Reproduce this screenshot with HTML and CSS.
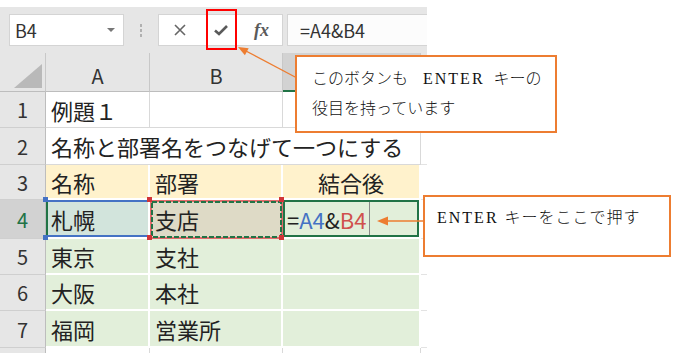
FILE: index.html
```html
<!DOCTYPE html>
<html lang="ja">
<head>
<meta charset="utf-8">
<link rel="stylesheet" href="styles.css">
</head>
<body>
<div class="toolbar">
  <div class="namebox"><span>B4</span><span class="caret"></span></div>
  <div class="sep"><i></i><i></i><i></i></div>
  <div class="btns">
    <span class="btn"><svg width="14" height="14" viewBox="0 0 14 14"><path d="M2 2L12 12M12 2L2 12" stroke="#666" stroke-width="1.6" fill="none"/></svg></span>
    <span class="btn"><svg width="16" height="14" viewBox="0 0 16 14"><path d="M2 7.5L6 11L14 3" stroke="#5a5a5a" stroke-width="2.6" fill="none"/></svg></span>
    <span class="btn fx">fx</span>
  </div>
  <div class="formula">=A4&amp;B4</div>
</div>

<div class="sheet">
  <div class="hd corner"><span class="tri"></span></div>
  <div class="hd">A</div>
  <div class="hd">B</div>
  <div class="hd sel">C</div>
  <div class="hd end"></div>

  <div class="rh">1</div>
  <div class="w">例題１</div>
  <div class="w"></div>
  <div class="w"></div>
  <div class="end"></div>

  <div class="rh">2</div>
  <div class="w span3">名称と部署名をつなげて一つにする</div>
  <div class="end"></div>

  <div class="rh">3</div>
  <div class="yl">名称</div>
  <div class="yl">部署</div>
  <div class="yl center">結合後</div>
  <div class="end"></div>

  <div class="rh sel">4</div>
  <div class="gr a4">札幌<span class="h hb tl"></span><span class="h hb bl"></span></div>
  <div class="gr b4">支店<svg class="ants" viewBox="0 0 133 39" preserveAspectRatio="none"><rect x="1" y="1" width="131" height="37" fill="none" stroke="#e06c6c" stroke-width="2"/><rect x="2" y="2" width="129" height="35" fill="none" stroke="#217346" stroke-width="2" stroke-dasharray="5 2"/></svg><span class="h hr tl"></span><span class="h hr bl"></span><span class="h hr tr"></span><span class="h hr br"></span></div>
  <div class="gr c4"><span>=</span><span class="ra">A4</span><span>&amp;</span><span class="rb">B4</span><span class="cur"></span></div>
  <div class="end"></div>

  <div class="rh">5</div>
  <div class="gr">東京</div>
  <div class="gr">支社</div>
  <div class="gr"></div>
  <div class="end"></div>

  <div class="rh">6</div>
  <div class="gr">大阪</div>
  <div class="gr">本社</div>
  <div class="gr"></div>
  <div class="end"></div>

  <div class="rh">7</div>
  <div class="gr">福岡</div>
  <div class="gr">営業所</div>
  <div class="gr"></div>
  <div class="end"></div>

  <div class="rh last"></div>
  <div class="w last"></div>
  <div class="w last"></div>
  <div class="w last"></div>
  <div class="end last"></div>
</div>

<div class="redbox"></div>

<svg class="arrows" width="676" height="353" viewBox="0 0 676 353">
  <line x1="297" y1="78" x2="245" y2="50.5" stroke="#ed7d31" stroke-width="1.3"/>
  <polygon points="238,47 248.7,48.2 244.9,55.2" fill="#ed7d31"/>
  <line x1="424" y1="221" x2="386" y2="221" stroke="#ed7d31" stroke-width="1.3"/>
  <polygon points="377,221 388,216.5 388,225.5" fill="#ed7d31"/>
</svg>

<div class="callout c1">
  <div class="ln">このボタンも<span class="en e1">ENTER</span>キーの</div>
  <div class="ln">役目を持っています</div>
</div>
<div class="callout c2">
  <div class="ln"><span class="en">ENTER</span><span class="wide">キーをここで押す</span></div>
</div>
</body>
</html>
```

FILE: styles.css
```css
* { box-sizing: border-box; margin: 0; padding: 0; }

body {
  width: 676px;
  height: 353px;
  position: relative;
  overflow: hidden;
  background: #fff;
  font-family: "Noto Sans CJK JP", "Noto Sans", sans-serif;
  color: #222;
}

/* formula bar */
.toolbar {
  margin-top: 7px;
  width: 427px;
  height: 46px;
  background: #e6e6e6;
  display: flex;
  align-items: center;
  padding-left: 9px;
  overflow: hidden;
}
.namebox {
  width: 115px;
  height: 32px;
  background: #fff;
  border: 1px solid #d4d4d4;
  display: flex;
  align-items: center;
  justify-content: space-between;
  padding: 0 8px 0 5px;
  font-size: 18px;
  color: #333;
}
.caret {
  width: 0;
  height: 0;
  border-left: 4px solid transparent;
  border-right: 4px solid transparent;
  border-top: 4px solid #777;
}
.sep {
  width: 34px;
  display: flex;
  flex-direction: column;
  align-items: center;
  gap: 2px;
}
.sep i {
  display: block;
  width: 2px;
  height: 3px;
  background: #b0b0b0;
}
.btns {
  width: 125px;
  height: 32px;
  background: #fff;
  border: 1px solid #d4d4d4;
  display: flex;
}
.btn {
  flex: 1;
  display: flex;
  align-items: center;
  justify-content: center;
}
.fx {
  font-family: "Liberation Serif", serif;
  font-style: italic;
  font-weight: 700;
  font-size: 18px;
  color: #5a5a5a;
}
.formula {
  flex: 1;
  margin-left: 4px;
  height: 32px;
  background: #fcfcfc;
  border: 1px solid #d4d4d4;
  border-right: none;
  padding-left: 12px;
  display: flex;
  align-items: center;
  font-size: 18px;
  color: #333;
}

/* sheet */
.sheet {
  display: grid;
  grid-template-columns: 46px 104px 133px 138px 6px;
  grid-template-rows: 39px 36px 37px 35px 39px 36px 36px 37px 5px;
  font-size: 22px;
}
.sheet > div {
  position: relative;
  display: flex;
  align-items: center;
  padding-left: 5px;
  white-space: nowrap;
  border-right: 1px solid #d9d9d9;
  border-bottom: 1px solid #d9d9d9;
}
.sheet > .hd {
  background: #e6e6e6;
  justify-content: center;
  padding: 6px 0 0;
  font-size: 20px;
  color: #333;
  border-right-color: #c8c8c8;
  border-bottom-color: #bdbdbd;
}
.sheet > .hd.sel {
  background: #d2d2d2;
  border-bottom: 2px solid #217346;
}
.sheet > .hd.end {
  border-right: none;
  background: #e6e6e6;
}
.corner { overflow: hidden; }
.tri {
  position: absolute;
  right: 3px;
  bottom: 3px;
  width: 0;
  height: 0;
  border-left: 28px solid transparent;
  border-bottom: 24px solid #b9b9b9;
}
.sheet > .rh {
  background: #e6e6e6;
  justify-content: center;
  padding: 0;
  font-size: 20px;
  color: #333;
  border-right-color: #bdbdbd;
  border-bottom-color: #cfcfcf;
}
.sheet > .rh.sel {
  background: #d2d2d2;
  color: #217346;
}
.span3 { grid-column: span 3; }
.sheet > .end {
  border-right: none;
  border-bottom-color: #e3e3e3;
}
.sheet > .yl {
  background: #fff2cc;
  border-right: 2px solid #fff;
  border-bottom: 2px solid #fff;
}
.sheet > .center { justify-content: center; padding: 0; }
.sheet > .gr {
  background: #e2efda;
  border-right: 2px solid #fff;
  border-bottom: 2px solid #fff;
}
.sheet > .last { border-bottom: none; }

/* selected row */
.sheet > .a4 { background: #d2e4dc; }
.a4::after {
  content: "";
  position: absolute;
  inset: 0 -2px 0 0;
  border-top: 2px solid #4472c4;
  border-bottom: 2px solid #4472c4;
  border-left: 2px solid #217346;
}
.sheet > .b4 { background: #dedac6; }
.ants {
  position: absolute;
  left: 0;
  top: 0;
  width: 133px;
  height: 39px;
}
.h {
  position: absolute;
  width: 5px;
  height: 5px;
  z-index: 2;
}
.hb { background: #4472c4; }
.hr { background: #d13438; }
.tl { left: -3px; top: -3px; }
.bl { left: -3px; bottom: -3px; }
.tr { right: -3px; top: -3px; }
.br { right: -3px; bottom: -3px; }
.sheet > .c4 { padding-left: 4px; }
.c4::after {
  content: "";
  position: absolute;
  inset: 0;
  border: 2px solid #217346;
}
.ra { color: #4472c4; }
.rb { color: #d0504d; }
.cur {
  align-self: stretch;
  width: 1px;
  margin-left: 3px;
  background: #8a8a8a;
}

/* annotations */
.redbox {
  position: absolute;
  left: 206px;
  top: 9px;
  width: 31px;
  height: 41px;
  border: 2px solid #f00;
}
.arrows {
  position: absolute;
  left: 0;
  top: 0;
}
.callout {
  position: absolute;
  background: #fff;
  border: 2px solid #ed7d31;
  font-family: "Liberation Serif", "Noto Sans CJK JP", serif;
  font-size: 16px;
  font-weight: 300;
  color: #111;
  line-height: 30px;
}
.ln { white-space: nowrap; }
.c1 {
  left: 295px;
  top: 55px;
  width: 262px;
  height: 78px;
  padding: 7px 0 0 15px;
}
.c2 {
  left: 423px;
  top: 195px;
  width: 248px;
  height: 62px;
  padding: 6px 0 0 12px;
}
.en {
  font-weight: 400;
  letter-spacing: 2px;
  margin-right: 6px;
}
.e1 {
  margin-left: 15px;
  margin-right: 9px;
}
.wide {
  letter-spacing: 1px;
}
```
